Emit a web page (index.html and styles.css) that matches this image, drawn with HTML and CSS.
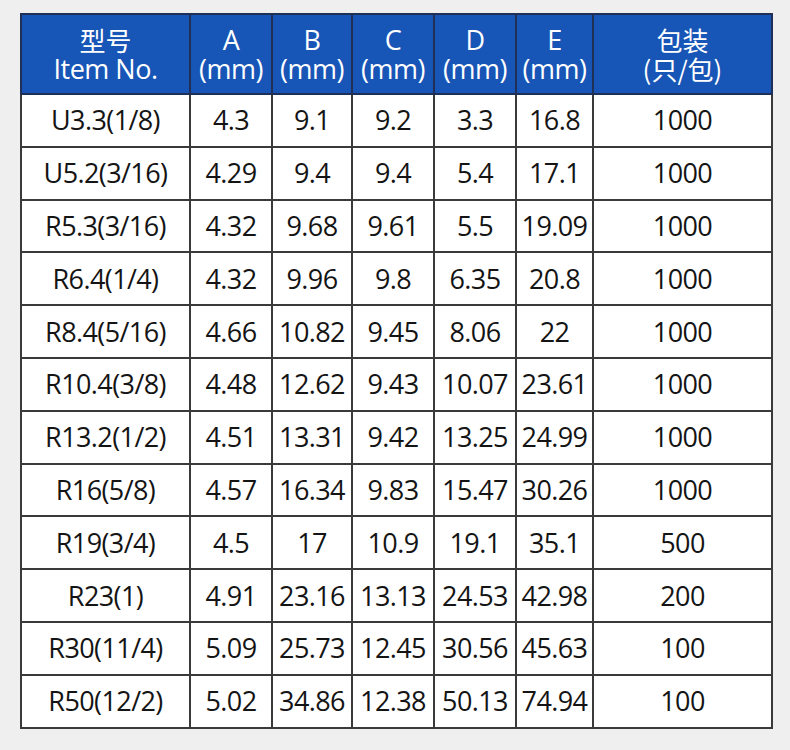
FILE: index.html
```html
<!DOCTYPE html>
<html lang="zh">
<head>
<meta charset="utf-8">
<title>规格表</title>
<link rel="stylesheet" href="styles.css">
</head>
<body>
<table class="spec">
  <colgroup>
    <col class="c-item">
    <col class="c-a">
    <col class="c-b">
    <col class="c-c">
    <col class="c-d">
    <col class="c-e">
    <col class="c-pack">
  </colgroup>
  <thead>
    <tr>
      <th><span class="line cjk">型号</span><span class="line">Item No.</span></th>
      <th><span class="line">A</span><span class="line">(mm)</span></th>
      <th><span class="line">B</span><span class="line">(mm)</span></th>
      <th><span class="line">C</span><span class="line">(mm)</span></th>
      <th><span class="line">D</span><span class="line">(mm)</span></th>
      <th><span class="line">E</span><span class="line">(mm)</span></th>
      <th><span class="line cjk">包装</span><span class="line cjk">(只/包)</span></th>
    </tr>
  </thead>
  <tbody>
    <tr><td>U3.3(1/8)</td><td>4.3</td><td>9.1</td><td>9.2</td><td>3.3</td><td>16.8</td><td>1000</td></tr>
    <tr><td>U5.2(3/16)</td><td>4.29</td><td>9.4</td><td>9.4</td><td>5.4</td><td>17.1</td><td>1000</td></tr>
    <tr><td>R5.3(3/16)</td><td>4.32</td><td>9.68</td><td>9.61</td><td>5.5</td><td>19.09</td><td>1000</td></tr>
    <tr><td>R6.4(1/4)</td><td>4.32</td><td>9.96</td><td>9.8</td><td>6.35</td><td>20.8</td><td>1000</td></tr>
    <tr><td>R8.4(5/16)</td><td>4.66</td><td>10.82</td><td>9.45</td><td>8.06</td><td>22</td><td>1000</td></tr>
    <tr><td>R10.4(3/8)</td><td>4.48</td><td>12.62</td><td>9.43</td><td>10.07</td><td>23.61</td><td>1000</td></tr>
    <tr><td>R13.2(1/2)</td><td>4.51</td><td>13.31</td><td>9.42</td><td>13.25</td><td>24.99</td><td>1000</td></tr>
    <tr><td>R16(5/8)</td><td>4.57</td><td>16.34</td><td>9.83</td><td>15.47</td><td>30.26</td><td>1000</td></tr>
    <tr><td>R19(3/4)</td><td>4.5</td><td>17</td><td>10.9</td><td>19.1</td><td>35.1</td><td>500</td></tr>
    <tr><td>R23(1)</td><td>4.91</td><td>23.16</td><td>13.13</td><td>24.53</td><td>42.98</td><td>200</td></tr>
    <tr><td>R30(11/4)</td><td>5.09</td><td>25.73</td><td>12.45</td><td>30.56</td><td>45.63</td><td>100</td></tr>
    <tr><td>R50(12/2)</td><td>5.02</td><td>34.86</td><td>12.38</td><td>50.13</td><td>74.94</td><td>100</td></tr>
  </tbody>
</table>
</body>
</html>
```

FILE: styles.css
```css
html, body {
  margin: 0;
  padding: 0;
  background: #efefef;
}

body {
  padding: 13px 20px 0 20px;
  font-family: "Open Sans", "Noto Sans CJK SC", sans-serif;
}

.spec {
  border-collapse: collapse;
  table-layout: fixed;
  width: 751px;
  background: #ffffff;
  color: #141414;
}

.c-item { width: 169px; }
.c-a { width: 82px; }
.c-b { width: 80px; }
.c-c { width: 82px; }
.c-d { width: 82px; }
.c-e { width: 77px; }
.c-pack { width: 179px; }

.spec th,
.spec td {
  border: 2px solid #3a3a3a;
  padding: 0;
  text-align: center;
  vertical-align: middle;
  white-space: nowrap;
  overflow: hidden;
}

.spec th {
  height: 78px;
  background: #1755b6;
  color: #ffffff;
  font-weight: 400;
  font-size: 27px;
  line-height: 29px;
  letter-spacing: -0.5px;
  border-color: #1f2f55;
}

.spec th .line {
  display: block;
  height: 29px;
  overflow: visible;
}

.spec th .cjk {
  font-family: "Noto Sans CJK SC", sans-serif;
  font-size: 26px;
  letter-spacing: 0;
}

.spec td {
  height: 50.8px;
  font-size: 27px;
  letter-spacing: -0.6px;
  line-height: 30px;
}
```
